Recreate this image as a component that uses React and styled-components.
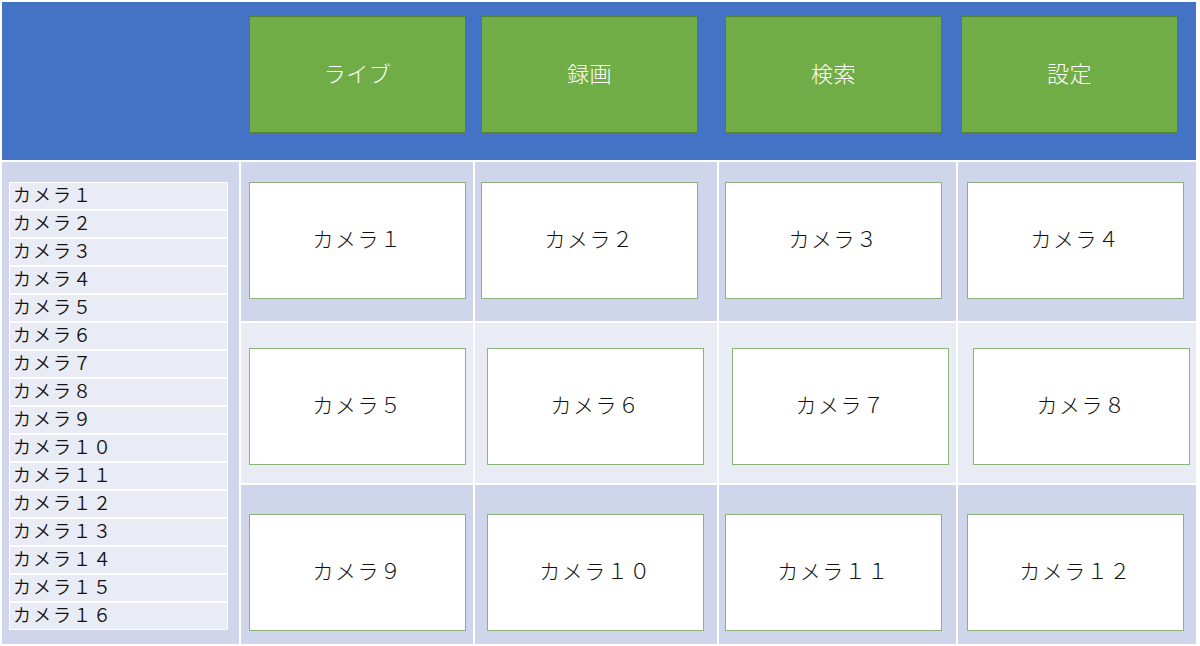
import React from "react";
import styled, { createGlobalStyle } from "styled-components";

const GlobalStyle = createGlobalStyle`
  html, body {
    margin: 0;
    padding: 0;
    background: #fff;
  }
  body {
    font-family: "Noto Sans CJK JP", "Noto Sans", sans-serif;
  }
`;

const menus = [
  { label: "ライブ", offset: 247 },
  { label: "録画", offset: 15 },
  { label: "検索", offset: 27 },
  { label: "設定", offset: 19 },
];

// each row: top padding + left offset of every camera box in its cell
const rows = [
  { tone: "dark", top: 20, cams: [[1, 8], [2, 6], [3, 6], [4, 9]] },
  { tone: "light", top: 25, cams: [[5, 8], [6, 12], [7, 13], [8, 15]] },
  { tone: "dark", top: 29, cams: [[9, 8], [10, 12], [11, 6], [12, 9]] },
];

const toWide = (n) =>
  String(n)
    .split("")
    .map((d) => String.fromCharCode(0xff10 + Number(d)))
    .join("");

const App = () => {
  return (
    <>
      <GlobalStyle />
      <Page>
        <Header>
          {menus.map((m) => (
            <MenuButton key={m.label} $offset={m.offset}>
              {m.label}
            </MenuButton>
          ))}
        </Header>
        <Table>
          <SideCell>
            <CameraList>
              {Array.from({ length: 16 }, (_, i) => (
                <ListItem key={i}>カメラ{toWide(i + 1)}</ListItem>
              ))}
            </CameraList>
          </SideCell>
          {rows.map((row) =>
            row.cams.map(([num, left]) => (
              <Cell key={num} $tone={row.tone} $top={row.top}>
                <CameraBox $left={left}>カメラ{toWide(num)}</CameraBox>
              </Cell>
            ))
          )}
        </Table>
      </Page>
    </>
  );
};

const Page = styled.div`
  width: 1200px;
  height: 646px;
  box-sizing: border-box;
  padding: 2px 4px 0 2px;
  display: flex;
  flex-direction: column;
  gap: 2px;
`;

const Header = styled.div`
  height: 158px;
  background: #4472c4;
  display: flex;
  align-items: flex-start;
  padding-top: 14px;
  box-sizing: border-box;
`;

const MenuButton = styled.div`
  margin-left: ${(p) => p.$offset}px;
  width: 217px;
  height: 117px;
  box-sizing: border-box;
  background: #70ad47;
  border: 1.5px solid #548235;
  color: #fff;
  font-size: 22px;
  font-weight: 300;
  letter-spacing: 0.5px;
  display: flex;
  align-items: center;
  justify-content: center;
  padding-bottom: 6px;
`;

const Table = styled.div`
  display: grid;
  grid-template-columns: 237px 232px 242px 237px 238px;
  grid-template-rows: 159px 160px 159px;
  gap: 2px;
  background: #fff;
`;

const SideCell = styled.div`
  grid-row: 1 / 4;
  background: #cfd5ea;
  padding: 20px 0 0 7px;
`;

const CameraList = styled.div`
  width: 219px;
  box-sizing: border-box;
  background: #fff;
  padding: 1px;
  display: flex;
  flex-direction: column;
  gap: 2px;
`;

const ListItem = styled.div`
  height: 26px;
  background: #e9ebf5;
  display: flex;
  align-items: center;
  padding: 0 0 4px 3px;
  box-sizing: border-box;
  font-size: 18px;
  font-weight: 350;
  letter-spacing: 2px;
  color: #111;
`;

const Cell = styled.div`
  background: ${(p) => (p.$tone === "dark" ? "#cfd5ea" : "#e9ebf5")};
  padding-top: ${(p) => p.$top}px;
  display: flex;
  align-items: flex-start;
`;

const CameraBox = styled.div`
  margin-left: ${(p) => p.$left}px;
  width: 217px;
  height: 117px;
  box-sizing: border-box;
  background: #fff;
  border: 1.5px solid #8ab27a;
  font-size: 21px;
  font-weight: 300;
  letter-spacing: 1.5px;
  color: #111;
  display: flex;
  align-items: center;
  justify-content: center;
  padding-bottom: 6px;
`;

export default App;
